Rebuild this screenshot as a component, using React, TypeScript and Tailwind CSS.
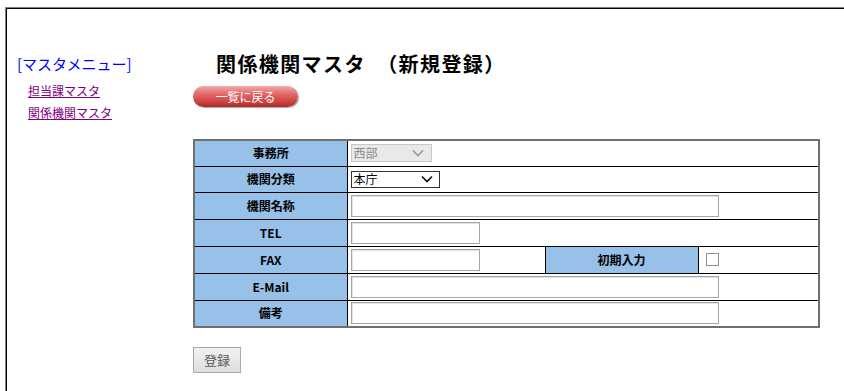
import React from 'react';

const Chevron = ({ color }: { color: string }) => (
  <svg width="12" height="8" viewBox="0 0 12 8" fill="none">
    <path d="M1 1.5l5 5 5-5" stroke={color} strokeWidth="1.7" />
  </svg>
);

const TextBox = ({ w }: { w: string }) => (
  <div className={`h-[22px] bg-white border border-[#a5a5a5] shadow-[inset_1px_1px_0_#e2e2e2] ${w}`} />
);

const Head = ({ children }: { children: React.ReactNode }) => (
  <th className="w-[153px] bg-[#97c1e8] border border-black text-[12px] font-bold text-black text-center p-0">
    {children}
  </th>
);

const App = () => {
  return (
    <div
      className="w-[844px] h-[391px] bg-white overflow-hidden"
      style={{ fontFamily: '"Noto Sans CJK JP", "Liberation Sans", sans-serif' }}
    >
      <div className="ml-[5px] mt-[7px] h-[400px] border-t border-l border-[#7f7f7f]">
        <div className="h-full border-t border-l border-black flex">
          {/* Menu */}
          <div className="w-[186px] shrink-0 pl-[10px] pt-[46px]">
            <div className="text-[15px] leading-[18px] text-[#0000ff]">[マスタメニュー]</div>
            <div className="pl-[11px] mt-[10px] flex flex-col gap-[7px]">
              <a className="text-[12px] leading-[15px] text-[#800080] underline cursor-pointer">担当課マスタ</a>
              <a className="text-[12px] leading-[15px] text-[#800080] underline cursor-pointer">関係機関マスタ</a>
            </div>
          </div>

          {/* Main */}
          <div className="flex-1 pt-[43px]">
            <h1 className="pl-[23px] text-[20px] leading-[24px] font-bold text-black tracking-[1.4px]">
              関係機関マスタ　（新規登録）
            </h1>
            <button className="mt-[10px] w-[105px] h-[21px] rounded-full bg-[linear-gradient(to_bottom,#f2a9a9_0%,#e26666_40%,#cf4343_75%,#a92a2a_100%)] shadow-[1px_1px_1px_rgba(0,0,0,0.35)] text-white text-[12px] leading-[21px] text-center">
              一覧に戻る
            </button>

            <table className="mt-[32px] border-collapse border-2 border-[#6f6f6f] w-[627px]">
              <tbody>
                <tr className="h-[26px]">
                  <Head>事務所</Head>
                  <td colSpan={3} className="border border-black px-[3px] py-0">
                    <div className="w-[81px] h-[18px] bg-[#e9e9e9] border border-[#c8c8c8] flex items-center justify-between pl-[2px] pr-[7px] text-[12px] text-[#8a8a8a]">
                      <span>西部</span>
                      <Chevron color="#9a9a9a" />
                    </div>
                  </td>
                </tr>
                <tr className="h-[26px]">
                  <Head>機関分類</Head>
                  <td colSpan={3} className="border border-black px-[3px] py-0">
                    <div className="w-[89px] h-[17px] bg-white border border-[#333] flex items-center justify-between pl-[2px] pr-[6px] text-[12px] text-black">
                      <span>本庁</span>
                      <Chevron color="#111" />
                    </div>
                  </td>
                </tr>
                <tr className="h-[27px]">
                  <Head>機関名称</Head>
                  <td colSpan={3} className="border border-black px-[3px] py-0">
                    <TextBox w="w-[368px]" />
                  </td>
                </tr>
                <tr className="h-[27px]">
                  <Head>TEL</Head>
                  <td colSpan={3} className="border border-black px-[3px] py-0">
                    <TextBox w="w-[129px]" />
                  </td>
                </tr>
                <tr className="h-[27px]">
                  <Head>FAX</Head>
                  <td className="w-[198px] border border-black px-[3px] py-0">
                    <TextBox w="w-[129px]" />
                  </td>
                  <Head>初期入力</Head>
                  <td className="border border-black px-[7px] py-0">
                    <div className="w-[13px] h-[13px] bg-white border border-[#8f8f8f]" />
                  </td>
                </tr>
                <tr className="h-[27px]">
                  <Head>E-Mail</Head>
                  <td colSpan={3} className="border border-black px-[3px] py-0">
                    <TextBox w="w-[368px]" />
                  </td>
                </tr>
                <tr className="h-[27px]">
                  <Head>備考</Head>
                  <td colSpan={3} className="border border-black px-[3px] py-0">
                    <TextBox w="w-[368px]" />
                  </td>
                </tr>
              </tbody>
            </table>

            <button className="mt-[19px] w-[48px] h-[26px] bg-[linear-gradient(to_bottom,#f2f2f2,#dedede)] border border-[#a8a8a8] text-[13px] text-[#555]">
              登録
            </button>
          </div>
        </div>
      </div>
    </div>
  );
};

export default App;
